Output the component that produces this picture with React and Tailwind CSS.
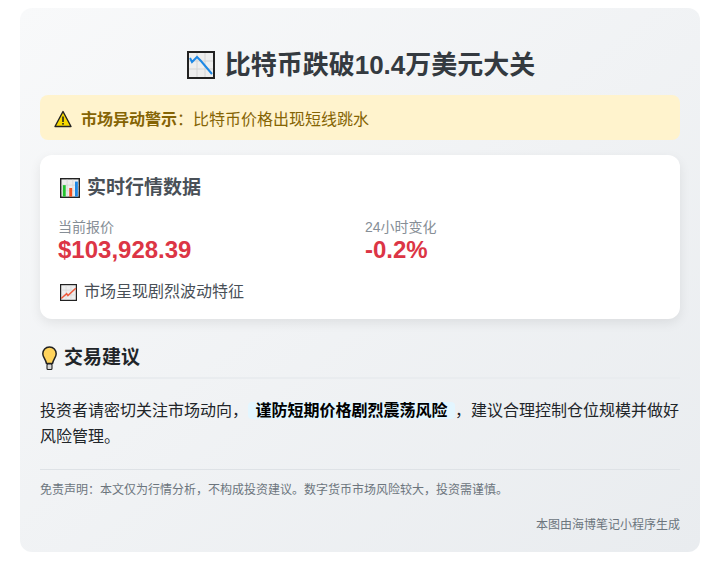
import React from 'react';

const fontStack = { fontFamily: '"Liberation Sans", "Noto Sans CJK SC", sans-serif' };

function ChartFrame({ size, children }) {
  return (
    <svg width={size} height={size} viewBox="0 0 28 28" className="shrink-0">
      <rect x="1" y="1" width="26" height="26" fill="#eeeeee" stroke="#222222" strokeWidth="2" />
      <path d="M10 2V26M18 2V26M2 10H26M2 18H26" stroke="#d4d4d4" strokeWidth="1" fill="none" />
      {children}
    </svg>
  );
}

function ChartDown({ size }) {
  return (
    <ChartFrame size={size}>
      <path d="M3 7L5 11L10 6L14 10L25 23" stroke="#1e88e5" strokeWidth="2" fill="none" />
    </ChartFrame>
  );
}

function ChartUp({ size }) {
  return (
    <ChartFrame size={size}>
      <path d="M2 24L11 16L13 19L26 7" stroke="#ef5a3c" strokeWidth="2.4" fill="none" />
    </ChartFrame>
  );
}

function ChartBars({ size }) {
  return (
    <ChartFrame size={size}>
      <rect x="4" y="10" width="4" height="16" fill="#22c32e" />
      <rect x="13" y="14" width="4" height="12" fill="#f4511e" />
      <rect x="21" y="5" width="4" height="21" fill="#1e88e5" />
    </ChartFrame>
  );
}

function Bulb() {
  return (
    <svg width="17" height="25" viewBox="0 0 17 25" className="shrink-0 translate-y-px">
      <path d="M9.5 1C5.5 1 2.8 3.8 2.8 7.8C2.8 11.2 5.5 13 6.5 17.5H12.5C13.5 13 16.2 11.2 16.2 7.8C16.2 3.8 13.5 1 9.5 1Z" fill="#ffd35c" stroke="#222222" strokeWidth="1.5" />
      <rect x="7" y="18" width="5" height="5.5" rx="1" fill="#d8d8d8" stroke="#222222" strokeWidth="1.1" />
    </svg>
  );
}

function Warning() {
  return (
    <svg width="18" height="18" viewBox="0 0 18 18" className="mt-[2px] shrink-0">
      <path d="M9 1.5L17 16.5H1Z" fill="#f7d900" stroke="#222222" strokeWidth="1.4" strokeLinejoin="round" />
      <rect x="8.2" y="6.5" width="1.6" height="5.5" fill="#222222" />
      <rect x="8.2" y="13" width="1.6" height="1.6" fill="#222222" />
    </svg>
  );
}

export default function App() {
  return (
    <div className="min-h-screen bg-white px-5 pt-2" style={fontStack}>
      <div className="h-[544px] rounded-xl bg-gradient-to-br from-[#f8f9fa] to-[#e9ecef] px-5 pt-5">
        {/* Title */}
        <h1 className="flex items-center justify-center gap-[10px] pt-4 pl-[2px] text-[26px] leading-[42px] font-bold text-[#343a40]">
          <ChartDown size={28} />
          <span>比特币跌破10.4万美元大关</span>
        </h1>

        {/* Alert */}
        <div className="mt-[9px] flex h-[45px] items-center gap-[9px] rounded-lg bg-[#fff3cd] px-[14px] text-base text-[#856404]">
          <Warning />
          <p className="pt-[4px]">
            <strong className="font-bold">市场异动警示</strong>：比特币价格出现短线跳水
          </p>
        </div>

        {/* Market data */}
        <div className="mt-[15px] h-[164px] rounded-xl bg-white px-[18px] pt-[21px] shadow-[0_4px_12px_rgba(0,0,0,0.08)]">
          <h2 className="flex items-center gap-[7px] pl-[2px] text-[19px] leading-[24px] font-bold text-[#495057]">
            <ChartBars size={20} />
            <span>实时行情数据</span>
          </h2>
          <div className="mt-[18px] grid grid-cols-2">
            <div>
              <div className="text-sm leading-[18px] text-[#868e96]">当前报价</div>
              <div className="text-2xl leading-[28px] font-bold text-[#dc3545]">$103,928.39</div>
            </div>
            <div className="pl-[5px]">
              <div className="text-sm leading-[18px] text-[#868e96]">24小时变化</div>
              <div className="text-2xl leading-[28px] font-bold text-[#dc3545]">-0.2%</div>
            </div>
          </div>
          <div className="mt-4 flex items-center gap-[7px] pl-[2px] text-base leading-[24px] text-[#495057]">
            <ChartUp size={17} />
            <span>市场呈现剧烈波动特征</span>
          </div>
        </div>

        {/* Advice */}
        <h2 className="mt-[26px] flex items-center gap-[7px] border-b-2 border-[#e9ecef] pb-[7px] text-[19px] leading-[24px] font-bold text-[#212529]">
          <Bulb />
          <span>交易建议</span>
        </h2>
        <p className="mt-[19px] text-base leading-[26px] text-[#212529]">
          投资者请密切关注市场动向，
          <strong className="rounded bg-[#e3f6ff] px-[7.5px] font-bold text-black">谨防短期价格剧烈震荡风险</strong>
          ，建议合理控制仓位规模并做好风险管理。
        </p>

        {/* Footer */}
        <div className="mt-[19px] border-t border-[#dee2e6] pt-[11px] text-xs leading-[18px] text-[#6c757d]">
          免责声明：本文仅为行情分析，不构成投资建议。数字货币市场风险较大，投资需谨慎。
        </div>
        <div className="mt-[18px] text-right text-xs leading-[16px] text-[#6c757d]">本图由海博笔记小程序生成</div>
      </div>
    </div>
  );
}
